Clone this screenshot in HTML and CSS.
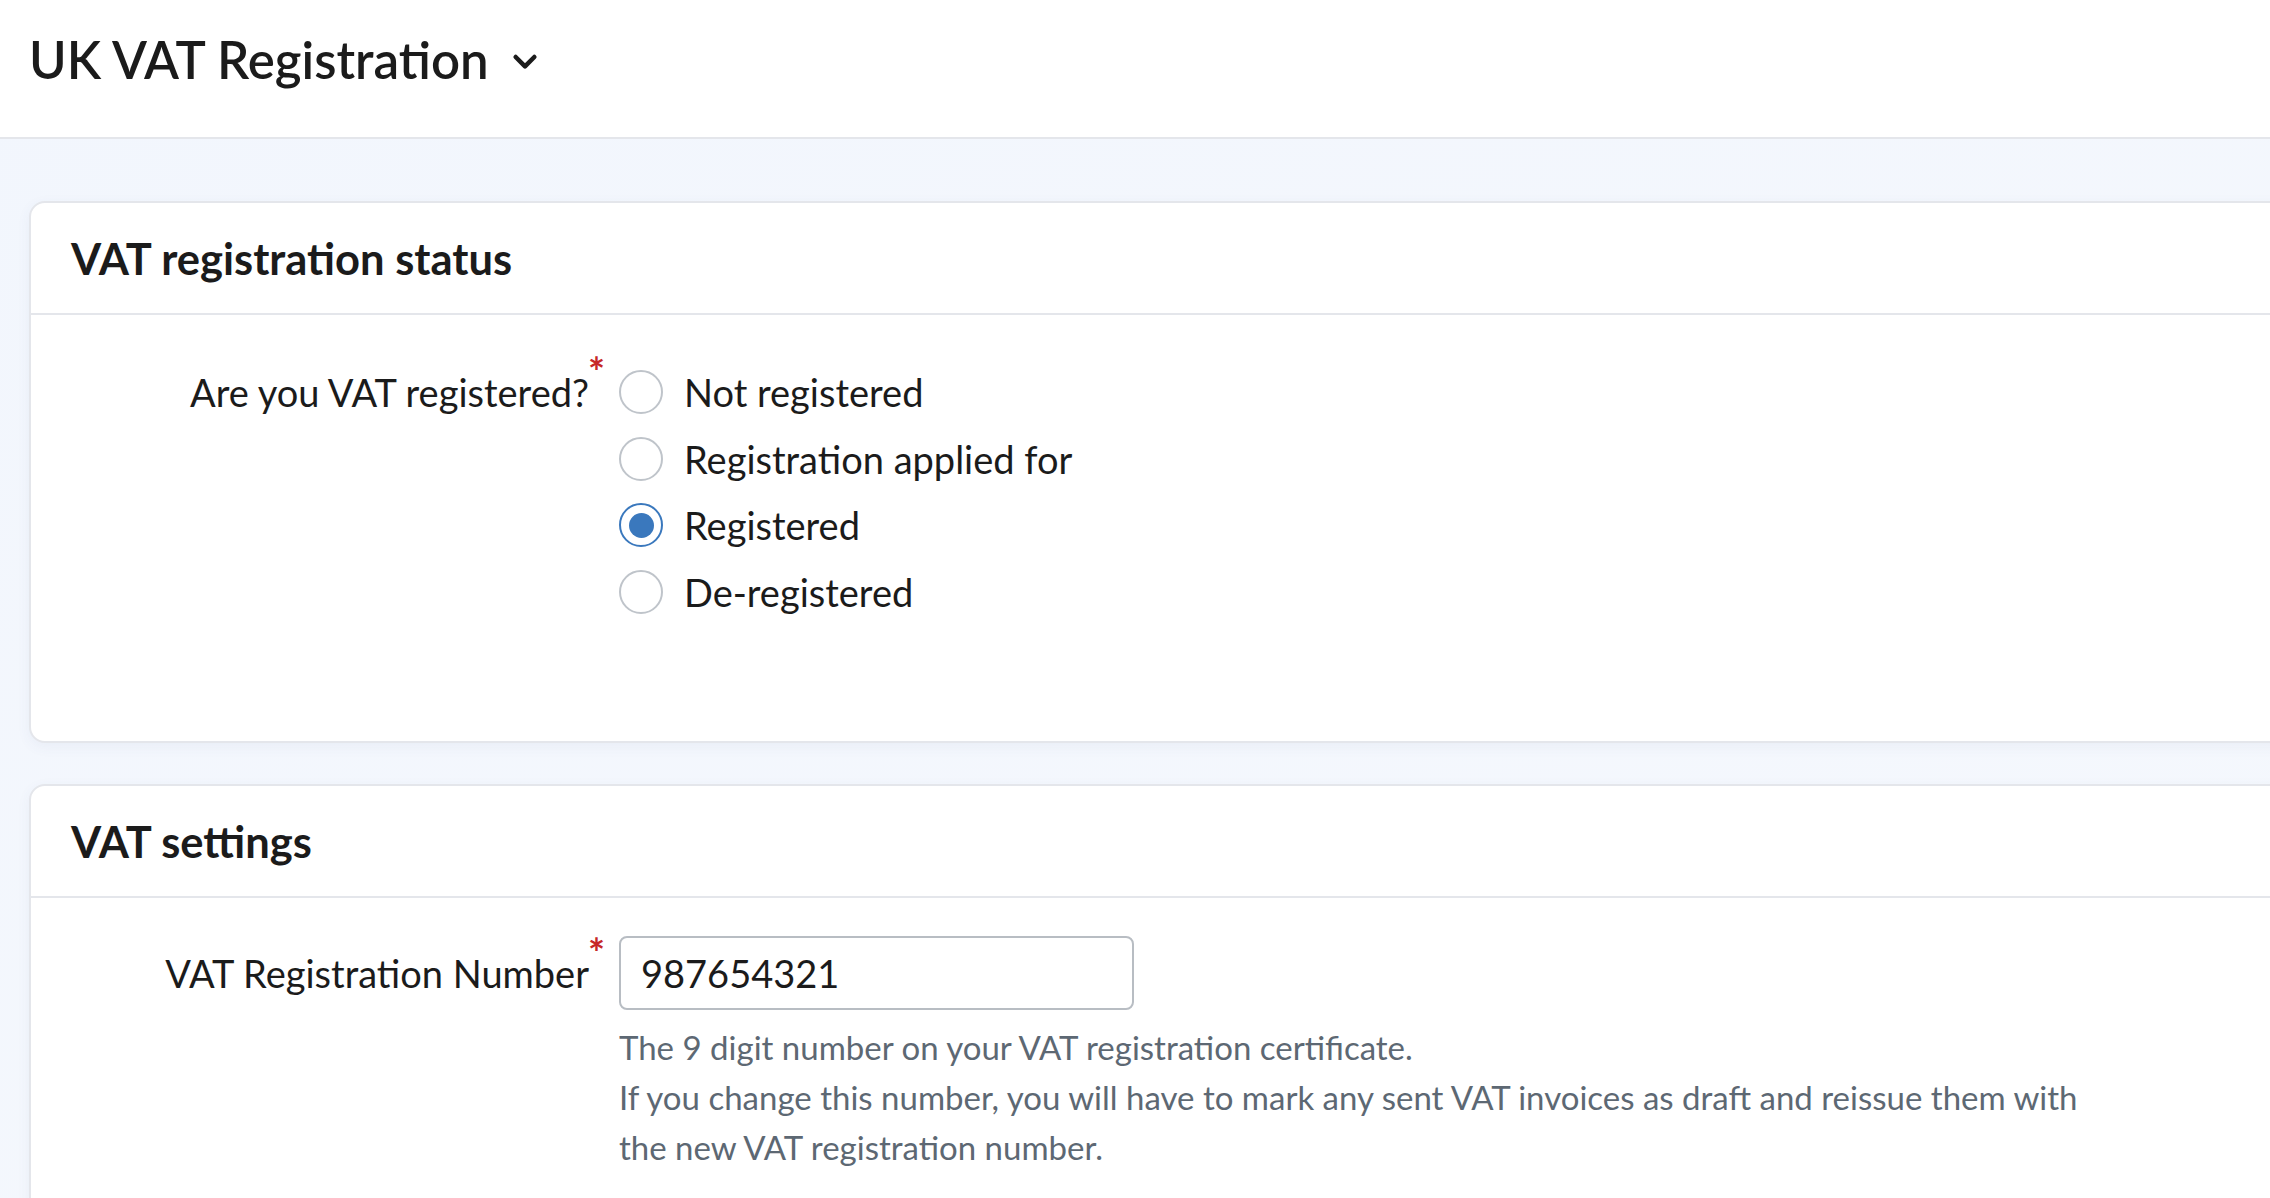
FILE: index.html
```html
<!DOCTYPE html>
<html lang="en">
<head>
<meta charset="utf-8">
<title>UK VAT Registration</title>
<link rel="stylesheet" href="styles.css">
</head>
<body>
<header class="page-header">
  <h1 class="page-title">UK VAT Registration</h1>
  <svg class="chevron" viewBox="0 0 24 24" width="24" height="24" aria-hidden="true"><path d="M5 9l7 7 7-7" fill="none" stroke="#1b1b1b" stroke-width="3.4" stroke-linecap="round" stroke-linejoin="round"/></svg>
</header>
<main class="content">
  <section class="card">
    <div class="card-head"><h2 class="card-title">VAT registration status</h2></div>
    <div class="card-body body-status">
      <div class="form-row">
        <div class="field-label row-label-radio">Are you VAT registered?<span class="req">*</span></div>
        <div class="radio-list">
          <label class="radio-item"><span class="radio"></span><span class="radio-text">Not registered</span></label>
          <label class="radio-item"><span class="radio"></span><span class="radio-text">Registration applied for</span></label>
          <label class="radio-item"><span class="radio checked"></span><span class="radio-text">Registered</span></label>
          <label class="radio-item"><span class="radio"></span><span class="radio-text">De-registered</span></label>
        </div>
      </div>
    </div>
  </section>
  <section class="card">
    <div class="card-head"><h2 class="card-title">VAT settings</h2></div>
    <div class="card-body body-settings">
      <div class="form-row">
        <div class="field-label row-label-input">VAT Registration Number<span class="req">*</span></div>
        <div class="field-control">
          <div class="text-input">987654321</div>
          <p class="help">The 9 digit number on your VAT registration certificate.<br>If you change this number, you will have to mark any sent VAT invoices as draft and reissue them with the new VAT registration number.</p>
        </div>
      </div>
    </div>
  </section>
</main>
</body>
</html>
```
FILE: styles.css
```css
html, body {
  margin: 0;
  padding: 0;
}
body {
  width: 2270px;
  height: 1198px;
  overflow: hidden;
  font-family: Lato, "Open Sans", sans-serif;
  color: #1b1b1b;
  background: linear-gradient(160deg, #f2f6fd 0%, #f5f8fd 100%);
}
.page-header {
  background: #ffffff;
  border-bottom: 2px solid #e4e6eb;
  display: flex;
  align-items: center;
  padding-left: 29px;
  padding-bottom: 18px;
  box-sizing: border-box;
  height: 139px;
}
.page-title {
  margin: 0;
  font-size: 51px;
  font-weight: 600;
  letter-spacing: 0;
  color: #1b1b1b;
}
.chevron {
  width: 32px;
  height: 32px;
  margin-left: 20px;
  margin-top: 2px;
}
.content {
  padding: 62px 0 0 29px;
}
.card {
  width: 2400px;
  background: #ffffff;
  border: 2px solid #e4e6eb;
  border-radius: 16px;
  box-shadow: 0 4px 14px rgba(60, 80, 130, 0.06);
  margin-bottom: 41px;
}
.card-head {
  height: 110px;
  border-bottom: 2px solid #e4e6eb;
  display: flex;
  align-items: center;
  padding-left: 40px;
}
.card-title {
  margin: 0;
  font-size: 43.5px;
  font-weight: 700;
  color: #1b1b1b;
}
.card-body {
  padding-left: 0;
}
.body-status {
  padding-top: 44px;
  padding-bottom: 116px;
}
.body-settings {
  padding-top: 38px;
  padding-bottom: 40px;
}
.form-row {
  display: grid;
  grid-template-columns: 571px 1fr;
  column-gap: 17px;
  align-items: start;
}
.field-label {
  text-align: right;
  font-size: 38px;
  white-space: nowrap;
}
.row-label-radio {
  line-height: 66px;
}
.row-label-input {
  line-height: 74px;
}
.req {
  color: #c62828;
  font-size: 40px;
  font-weight: 700;
  vertical-align: 20px;
  line-height: 0;
  margin-left: -1px;
  margin-right: -3px;
}
.radio-list {
  display: flex;
  flex-direction: column;
}
.radio-item {
  display: flex;
  align-items: center;
  height: 66.5px;
}
.radio {
  width: 44px;
  height: 44px;
  box-sizing: border-box;
  border: 2.5px solid #bfc4ca;
  border-radius: 50%;
  background: #fff;
  display: flex;
  align-items: center;
  justify-content: center;
  flex: none;
}
.radio.checked {
  border-color: #3a78bd;
}
.radio.checked::after {
  content: "";
  width: 25px;
  height: 25px;
  border-radius: 50%;
  background: #3a78bd;
}
.radio-text {
  margin-left: 21px;
  font-size: 38px;
  color: #1b1b1b;
}
.field-control {
  width: 1480px;
}
.text-input {
  width: 515px;
  height: 74px;
  box-sizing: border-box;
  border: 2px solid #b8bdc3;
  border-radius: 8px;
  padding-left: 20px;
  font-size: 38px;
  line-height: 70px;
  color: #1b1b1b;
}
.help {
  margin: 12px 0 0;
  font-size: 33px;
  line-height: 50px;
  color: #5d6873;
}
```
